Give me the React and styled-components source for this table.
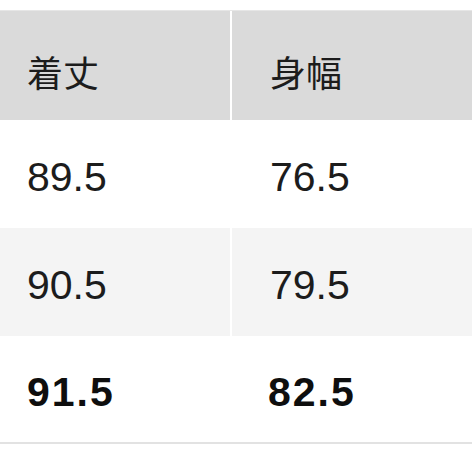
import React from 'react'
import styled, { createGlobalStyle } from 'styled-components'

const GlobalStyle = createGlobalStyle`
    html, body {
        margin: 0;
        padding: 0;
        background: #ffffff;
    }
`

const Page = styled.div`
    width: 475px;
    height: 475px;
    padding-top: 10px;
    box-sizing: border-box;
    background: #ffffff;
`

const Table = styled.div`
    width: 472px;
    border-top: 1px solid #e6e6e6;
    border-bottom: 2px solid #e2e2e2;
`

const Row = styled.div`
    display: grid;
    grid-template-columns: 230px 240px;
    column-gap: 2px;
    height: ${props => props.h}px;
`

const Cell = styled.div`
    display: flex;
    align-items: center;
    padding-left: ${props => props.pad}px;
    padding-top: ${props => (props.head ? 10 : 6)}px;
    box-sizing: border-box;
    background: ${props => props.bg};
    color: ${props => (props.bold ? '#0e0e0e' : '#1c1c1c')};
    font-family: ${props =>
        props.head
            ? '"Noto Sans CJK JP", sans-serif'
            : '"Liberation Sans", Arial, sans-serif'};
    font-size: ${props => (props.head ? 36 : 41)}px;
    font-weight: ${props => (props.bold ? 700 : 400)};
    letter-spacing: ${props => (props.head ? 0 : props.bold ? 2 : 0)}px;
`

const rows = [
    { a: '89.5', b: '76.5', bg: '#ffffff', h: 108 },
    { a: '90.5', b: '79.5', bg: '#f4f4f4', h: 108 },
    { a: '91.5', b: '82.5', bg: '#ffffff', h: 106, bold: true },
]

export default function App() {
    return (
        <Page>
            <GlobalStyle />
            <Table>
                <Row h={109}>
                    <Cell head bg="#dadada" pad={27}>着丈</Cell>
                    <Cell head bg="#dadada" pad={38}>身幅</Cell>
                </Row>
                {rows.map(r => (
                    <Row key={r.a} h={r.h}>
                        <Cell bg={r.bg} pad={27} bold={r.bold}>{r.a}</Cell>
                        <Cell bg={r.bg} pad={r.bold ? 36 : 38} bold={r.bold}>{r.b}</Cell>
                    </Row>
                ))}
            </Table>
        </Page>
    )
}
